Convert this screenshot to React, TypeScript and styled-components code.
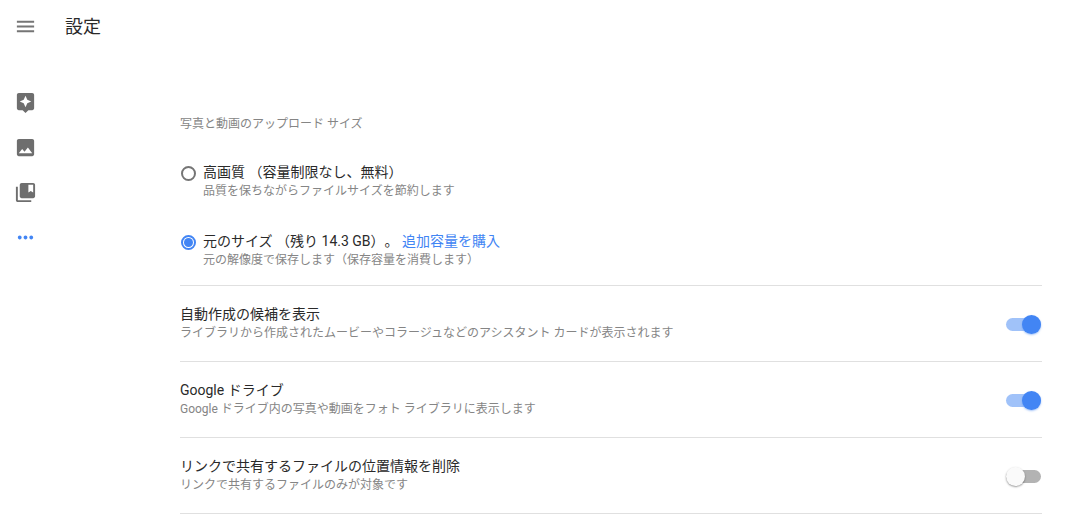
import React, { useState } from "react";
import styled, { createGlobalStyle } from "styled-components";

const GlobalStyle = createGlobalStyle`
  *, *::before, *::after {
    box-sizing: border-box;
  }

  body {
    margin: 0;
    background: #fff;
    color: #2a2a2a;
    font-family: Roboto, "Noto Sans CJK JP", sans-serif;
    font-size: 14px;
    line-height: 18px;
    text-spacing-trim: space-all;
  }
`;

const Page = styled.div`
  display: flex;
  flex-direction: column;
`;

const TopBar = styled.header`
  display: flex;
  align-items: center;
  gap: 28px;
  height: 53px;
  padding: 0 14px;
`;

const PageTitle = styled.h1`
  margin: 0;
  font-size: 18px;
  font-weight: 400;
  line-height: 24px;
`;

const IconButton = styled.button`
  display: flex;
  padding: 0;
  border: 0;
  background: none;
  color: #757575;
  cursor: pointer;
`;

const Body = styled.div`
  display: flex;
`;

const Sidebar = styled.nav`
  display: flex;
  flex-direction: column;
  gap: 22px;
  padding: 38px 14px;
`;

const NavLink = styled.a<{ $active?: boolean }>`
  display: flex;
  color: ${(p) => (p.$active ? "#4285f4" : "#6e6e6e")};
`;

const Icon = styled.svg`
  display: block;
  width: 23px;
  height: 23px;
  fill: currentColor;
`;

const Settings = styled.main`
  flex: 1;
  min-width: 0;
  padding: 62px 42px 0 129px;
`;

const UploadSize = styled.fieldset`
  min-width: 0;
  margin: 0;
  padding: 0 0 15px;
  border: 0;
  border-bottom: 1px solid #e0e0e0;
`;

const Legend = styled.legend`
  padding: 0;
  color: #858585;
  font-size: 12px;
`;

const Options = styled.div`
  display: flex;
  flex-direction: column;
  gap: 31px;
  padding-top: 30px;
`;

const Option = styled.div`
  display: flex;
  align-items: flex-start;
  gap: 7px;
`;

const Radio = styled.input`
  appearance: none;
  display: grid;
  place-items: center;
  flex: none;
  width: 15px;
  height: 15px;
  margin: 3px 0 0 1px;
  border: 2px solid #757575;
  border-radius: 50%;

  &:checked {
    border-color: #4285f4;
  }

  &:checked::before {
    content: "";
    width: 9px;
    height: 9px;
    border-radius: 50%;
    background: #4285f4;
  }
`;

const Texts = styled.div`
  display: flex;
  flex-direction: column;
  min-width: 0;
`;

const Name = styled.div`
  font-size: 14px;
`;

const Note = styled.div`
  color: #858585;
  font-size: 12px;
  line-height: 20px;
`;

const BuyLink = styled.a`
  color: #4285f4;
  text-decoration: none;
`;

const SettingRow = styled.div`
  display: flex;
  align-items: center;
  justify-content: space-between;
  gap: 24px;
  padding: 19px 0 18px;
  border-bottom: 1px solid #e0e0e0;
`;

const Switch = styled.input`
  appearance: none;
  display: flex;
  align-items: center;
  flex: none;
  width: 35px;
  height: 13px;
  margin: 0 1px 0 0;
  border-radius: 7px;
  background: #b3b3b3;
  cursor: pointer;

  &::before {
    content: "";
    flex: none;
    width: 19px;
    height: 19px;
    border-radius: 50%;
    background: #fafafa;
    box-shadow: 0 1px 2px rgba(0, 0, 0, 0.4);
  }

  &:checked {
    justify-content: flex-end;
    background: #a0c2f9;
  }

  &:checked::before {
    background: #4285f4;
    box-shadow: 0 1px 2px rgba(66, 133, 244, 0.5);
  }
`;

const navItems = [
  {
    label: "アシスタント",
    path: "M19 2H5c-1.1 0-2 .9-2 2v14c0 1.1.9 2 2 2h4l3 3 3-3h4c1.1 0 2-.9 2-2V4c0-1.1-.9-2-2-2zm-5.12 10.88L12 17l-1.88-4.12L6 11l4.12-1.88L12 5l1.88 4.12L18 11l-4.12 1.88z",
  },
  {
    label: "フォト",
    path: "M21 19V5c0-1.1-.9-2-2-2H5c-1.1 0-2 .9-2 2v14c0 1.1.9 2 2 2h14c1.1 0 2-.9 2-2zM5 18l3.5-4.5 2.5 3.01L14.5 12l4.5 6H5z",
  },
  {
    label: "アルバム",
    path: "M4 6H2v14c0 1.1.9 2 2 2h14v-2H4V6zm16-4H8c-1.1 0-2 .9-2 2v12c0 1.1.9 2 2 2h12c1.1 0 2-.9 2-2V4c0-1.1-.9-2-2-2zm0 10l-2.5-1.5L15 12V4h5v8z",
  },
  {
    label: "その他",
    active: true,
    path: "M6 10c-1.1 0-2 .9-2 2s.9 2 2 2 2-.9 2-2-.9-2-2-2zm12 0c-1.1 0-2 .9-2 2s.9 2 2 2 2-.9 2-2-.9-2-2-2zm-6 0c-1.1 0-2 .9-2 2s.9 2 2 2 2-.9 2-2-.9-2-2-2z",
  },
];

const switches = [
  {
    id: "suggestions",
    name: "自動作成の候補を表示",
    note: "ライブラリから作成されたムービーやコラージュなどのアシスタント カードが表示されます",
    on: true,
  },
  {
    id: "drive",
    name: "Google ドライブ",
    note: "Google ドライブ内の写真や動画をフォト ライブラリに表示します",
    on: true,
  },
  {
    id: "location",
    name: "リンクで共有するファイルの位置情報を削除",
    note: "リンクで共有するファイルのみが対象です",
    on: false,
  },
];

export default function App() {
  const [size, setSize] = useState("original");

  return (
    <Page>
      <GlobalStyle />
      <TopBar>
        <IconButton type="button" aria-label="メニュー">
          <Icon viewBox="0 0 24 24" aria-hidden="true">
            <path d="M3 18h18v-2H3v2zm0-5h18v-2H3v2zm0-7v2h18V6H3z" />
          </Icon>
        </IconButton>
        <PageTitle>設定</PageTitle>
      </TopBar>
      <Body>
        <Sidebar>
          {navItems.map((item) => (
            <NavLink key={item.label} href="#" aria-label={item.label} $active={item.active}>
              <Icon viewBox="0 0 24 24" aria-hidden="true">
                <path d={item.path} />
              </Icon>
            </NavLink>
          ))}
        </Sidebar>
        <Settings>
          <UploadSize>
            <Legend>写真と動画のアップロード サイズ</Legend>
            <Options>
              <Option>
                <Radio
                  type="radio"
                  name="size"
                  id="size-high"
                  checked={size === "high"}
                  onChange={() => setSize("high")}
                />
                <Texts>
                  <Name>
                    <label htmlFor="size-high">高画質 （容量制限なし、無料）</label>
                  </Name>
                  <Note>品質を保ちながらファイルサイズを節約します</Note>
                </Texts>
              </Option>
              <Option>
                <Radio
                  type="radio"
                  name="size"
                  id="size-original"
                  checked={size === "original"}
                  onChange={() => setSize("original")}
                />
                <Texts>
                  <Name>
                    <label htmlFor="size-original">元のサイズ （残り 14.3 GB）。</label>{" "}
                    <BuyLink href="#">追加容量を購入</BuyLink>
                  </Name>
                  <Note>元の解像度で保存します（保存容量を消費します）</Note>
                </Texts>
              </Option>
            </Options>
          </UploadSize>
          {switches.map((item) => (
            <SettingRow key={item.id}>
              <Texts>
                <Name>
                  <label htmlFor={item.id}>{item.name}</label>
                </Name>
                <Note>{item.note}</Note>
              </Texts>
              <Switch type="checkbox" role="switch" id={item.id} defaultChecked={item.on} />
            </SettingRow>
          ))}
        </Settings>
      </Body>
    </Page>
  );
}
